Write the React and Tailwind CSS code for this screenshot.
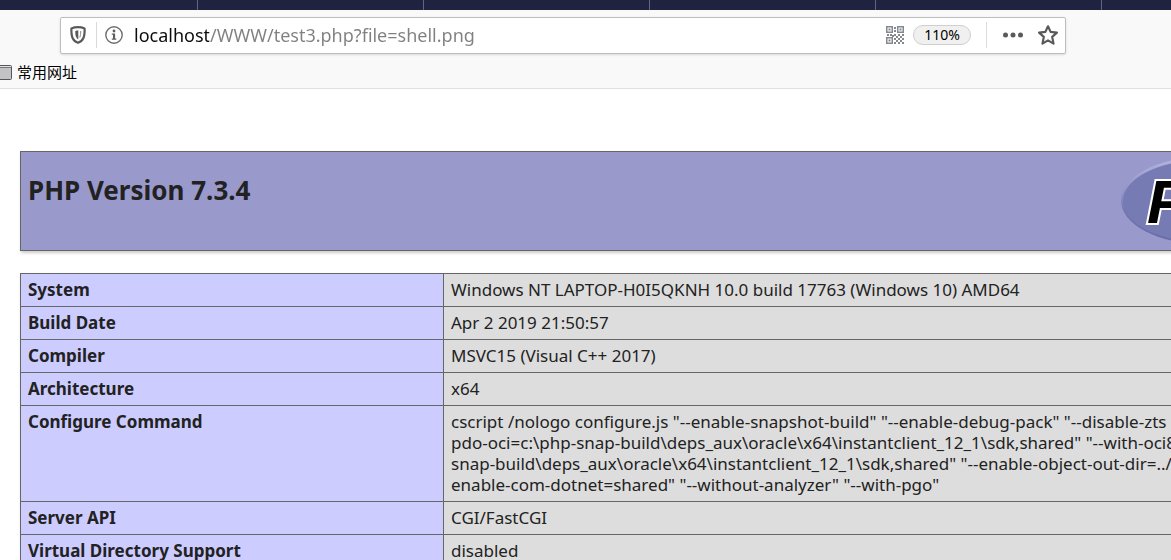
import React, { useState } from "react";

const tabs = ["t2", "t3", "t4", "t5"];

const info = [
  { name: "System", lines: ["Windows NT LAPTOP-H0I5QKNH 10.0 build 17763 (Windows 10) AMD64"] },
  { name: "Build Date", lines: ["Apr 2 2019 21:50:57"] },
  { name: "Compiler", lines: ["MSVC15 (Visual C++ 2017)"] },
  { name: "Architecture", lines: ["x64"] },
  {
    name: "Configure Command",
    lines: [
      'cscript /nologo configure.js "--enable-snapshot-build" "--enable-debug-pack" "--disable-zts',
      'pdo-oci=c:\\php-snap-build\\deps_aux\\oracle\\x64\\instantclient_12_1\\sdk,shared" "--with-oci8',
      'snap-build\\deps_aux\\oracle\\x64\\instantclient_12_1\\sdk,shared" "--enable-object-out-dir=../',
      'enable-com-dotnet=shared" "--without-analyzer" "--with-pgo"',
    ],
  },
  { name: "Server API", lines: ["CGI/FastCGI"] },
  { name: "Virtual Directory Support", lines: ["disabled"] },
];

function ShieldIcon() {
  return (
    <svg width="16" height="18" viewBox="0 0 16 18" fill="none">
      <path
        d="M8 1.200c-2.300 0-4.800.5-6.600 1.300-.1 4 .1 7.300 1.300 9.800 1 2.100 2.900 3.800 5.300 4.500 2.400-.7 4.300-2.400 5.300-4.500 1.200-2.500 1.400-5.800 1.300-9.800C12.800 1.700 10.300 1.200 8 1.200z"
        stroke="#5a5a5c"
        strokeWidth="2.200"
        strokeLinejoin="round"
      />
      <path d="M8.300 4.500c-1.100 0-2.100.1-3 .4 0 2.700.1 4.600.8 6.100.5 1.100 1.200 1.800 2.200 2.400z" fill="#5a5a5c" />
      <path d="M10.700 5c.1 2.600-.1 4.700-.9 6.500" stroke="#8a8a8c" strokeWidth="1" />
    </svg>
  );
}

function InfoIcon() {
  return (
    <svg width="18" height="18" viewBox="0 0 18 18" fill="none">
      <circle cx="9" cy="9" r="8.200" stroke="#6e6e70" strokeWidth="1.400" />
      <circle cx="9" cy="5" r="1.400" fill="#5f5f61" />
      <path d="M6.800 7.600h3.300v5h1.200v1.200H6.800v-1.200H8V8.800H6.800z" fill="#5f5f61" />
    </svg>
  );
}

function QrIcon() {
  const eyes = [[0, 0], [11, 0], [0, 11]];
  const dots = [
    [8, 1], [8, 4], [1, 8], [4, 8], [8, 8], [12, 8], [16, 8], [6, 9], [10, 10], [14, 10],
    [8, 12], [12, 12], [16, 12], [10, 14], [14, 14], [8, 16], [12, 16], [16, 16],
  ];
  return (
    <svg width="18" height="18" viewBox="0 0 18 18">
      {eyes.map(([x, y]) => (
        <g key={`${x}-${y}`}>
          <rect x={x + 0.75} y={y + 0.75} width="5.500" height="5.500" fill="none" stroke="#84898f" strokeWidth="1.500" />
          <rect x={x + 2.5} y={y + 2.5} width="2" height="2" fill="#84898f" />
        </g>
      ))}
      {dots.map(([x, y]) => (
        <rect key={`${x}-${y}`} x={x} y={y} width="2" height="2" fill="#84898f" />
      ))}
    </svg>
  );
}

function StarIcon() {
  return (
    <svg width="20" height="20" viewBox="0 0 20 20" fill="none">
      <path
        d="M10 1.300l2.600 5.600 6.300.7-4.700 4.300 1.300 6.700L10 15.400l-5.500 3.200 1.300-6.700L1.100 7.600l6.300-.7z"
        stroke="#5a5a5c"
        strokeWidth="2.200"
        strokeLinejoin="round"
      />
    </svg>
  );
}

function FolderIcon() {
  return (
    <svg width="16" height="16" viewBox="0 0 16 16">
      <rect x="0.500" y="1.500" width="15" height="14" rx="1" fill="#e4e4e4" stroke="#555" />
      <rect x="1" y="4" width="14" height="11" fill="#c3c3c5" />
      <path d="M1 3.500h14" stroke="#777" />
    </svg>
  );
}

function PhpLogo() {
  return (
    <svg width="166" height="90" viewBox="0 0 166 90" role="img" aria-label="PHP logo">
      <defs>
        <linearGradient id="rim" x1="0" y1="0" x2="0" y2="1">
          <stop offset="0" stopColor="#b4b6de" />
          <stop offset="0.450" stopColor="#8a8ec2" />
          <stop offset="0.600" stopColor="#7478b0" />
          <stop offset="1" stopColor="#676ca8" />
        </linearGradient>
      </defs>
      <ellipse cx="83" cy="44.500" rx="83" ry="43.500" fill="url(#rim)" />
      <ellipse cx="83" cy="45" rx="81" ry="41" fill="#777bb3" />
      <text
        x="26"
        y="67"
        className="font-['Liberation_Sans'] text-[62px] font-bold italic"
        fill="#000"
        stroke="#fff"
        strokeWidth="4"
        paintOrder="stroke"
      >
        PHP
      </text>
    </svg>
  );
}

export default function App() {
  const [url, setUrl] = useState("localhost/WWW/test3.php?file=shell.png");

  return (
    <div className="h-screen overflow-hidden bg-white font-['Noto_Sans','Noto_Sans_CJK_SC',sans-serif] text-[#222]">
      {/* Tab strip */}
      <div className="flex h-[10px] bg-[#202340]">
        <div className="w-[198px] shrink-0 border-r border-[#63657c]" />
        {tabs.map((t) => (
          <div key={t} className="w-[226px] shrink-0 border-r border-[#63657c]" />
        ))}
      </div>

      {/* Toolbar */}
      <div className="border-b border-[#e0e0e1] bg-[#f9f9fa] pt-[7px]">
        <div className="mr-[105px] ml-[60px] flex h-[37px] items-center rounded-xs border border-[#bebebf] bg-white pr-[7px] pb-[2px] pl-[9px] shadow-sm">
          <button aria-label="Tracking protection">
            <ShieldIcon />
          </button>
          <div className="mx-2 ml-[10px] h-[26px] w-px bg-[#d9d9da]" />
          <button aria-label="Site information">
            <InfoIcon />
          </button>
          <input
            aria-label="Address"
            value={url}
            onChange={(e) => setUrl(e.target.value)}
            className="ml-[11px] min-w-0 flex-1 bg-[linear-gradient(90deg,#0c0c0d_75px,#808081_75px)] bg-clip-text text-[18px] leading-6 text-transparent caret-black outline-none"
          />
          <button aria-label="QR code">
            <QrIcon />
          </button>
          <button className="ml-[9px] h-5 w-[58px] rounded-full border border-[#cfcfd0] bg-[#f0f0f1] text-sm leading-[18px] text-black">
            110%
          </button>
          <div className="mx-4 ml-[15px] h-[26px] w-px bg-[#dcdcdd]" />
          <button aria-label="Page actions">
            <svg width="20" height="6" viewBox="0 0 20 6" fill="#5a5a5c">
              <circle cx="2.500" cy="3" r="2.500" />
              <circle cx="10" cy="3" r="2.500" />
              <circle cx="17.500" cy="3" r="2.500" />
            </svg>
          </button>
          <button aria-label="Bookmark this page" className="ml-[15px]">
            <StarIcon />
          </button>
        </div>

        {/* Bookmarks */}
        <div className="-ml-1 flex h-[34px] items-center pt-[2px]">
          <button className="flex items-center gap-[5px] text-[15px] leading-5 text-black">
            <FolderIcon />
            常用网址
          </button>
        </div>
      </div>

      {/* phpinfo() output, wider than the window */}
      <main className="-mr-[124px] pt-[62px] pl-5">
        <header className="flex h-[100px] items-center justify-between border border-[#666] bg-[#9999cc] px-[7px] shadow-[1px_2px_3px_#ccc]">
          <h1 className="pb-[23px] text-[26px] leading-9 font-bold">PHP Version 7.3.4</h1>
          <a href="http://www.php.net/">
            <PhpLogo />
          </a>
        </header>

        <table className="mt-[22px] w-full table-fixed border-collapse text-[17px] leading-[21px] shadow-[1px_2px_3px_#ccc]">
          <colgroup>
            <col className="w-[423px]" />
            <col />
          </colgroup>
          <tbody>
            {info.map((row) => (
              <tr key={row.name}>
                <th
                  scope="row"
                  className="border border-[#666] bg-[#ccccff] px-[7px] pt-[5px] pb-[6px] text-left align-top font-bold"
                >
                  {row.name}
                </th>
                <td className="border border-[#666] bg-[#dddddd] px-[7px] pt-[5px] pb-[6px] align-top whitespace-nowrap">
                  {row.lines.map((line) => (
                    <div key={line}>{line}</div>
                  ))}
                </td>
              </tr>
            ))}
          </tbody>
        </table>
      </main>
    </div>
  );
}
